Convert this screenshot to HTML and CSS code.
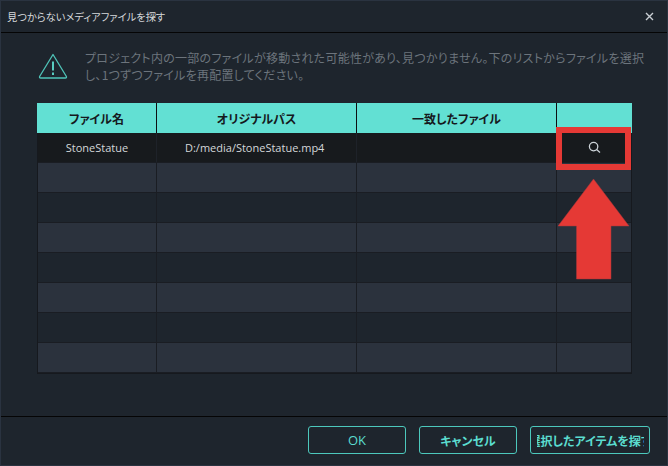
FILE: index.html
```html
<!DOCTYPE html>
<html lang="ja">
<head>
<meta charset="utf-8">
<title>見つからないメディアファイルを探す</title>
<link rel="stylesheet" href="styles.css">
</head>
<body>
<div class="dialog">
  <header class="titlebar">
    <span class="title">見つからないメディアファイルを探す</span>
    <svg class="close" width="9" height="9" viewBox="0 0 9 9"><path d="M1 1l7 7M8 1l-7 7" stroke="#c9ced3" stroke-width="1.4" fill="none"/></svg>
  </header>
  <main class="content">
    <div class="notice">
      <svg class="warn" width="30" height="26" viewBox="0 0 30 26"><path d="M15 1.5 L28.400 23.500 Q28.800 25 27.400 25 H2.600 Q1.200 25 1.600 23.500 Z" fill="none" stroke="#4fc4b8" stroke-width="1.3" stroke-linejoin="round"/><path d="M15 8.500V17.500" stroke="#5fe0d2" stroke-width="1.8"/><path d="M15 19.500V22" stroke="#5fe0d2" stroke-width="1.8"/></svg>
      <p class="message">プロジェクト内の一部のファイルが移動された可能性があり、見つかりません。下のリストからファイルを選択し、1つずつファイルを再配置してください。</p>
    </div>
    <div class="table">
      <div class="row head"><div class="c c1">ファイル名</div><div class="c c2">オリジナルパス</div><div class="c c3">一致したファイル</div><div class="c c4"></div></div>
      <div class="row dark"><div class="c c1">StoneStatue</div><div class="c c2">D:/media/StoneStatue.mp4</div><div class="c c3"></div><div class="c c4"><svg width="13" height="13" viewBox="0 0 13 13"><circle cx="5.600" cy="5.600" r="4.200" fill="none" stroke="#ccd3d8" stroke-width="1.300"/><path d="M8.600 8.600l3.400 2.800" stroke="#ccd3d8" stroke-width="1.300" fill="none"/></svg></div></div>
      <div class="row odd"><div class="c c1"></div><div class="c c2"></div><div class="c c3"></div><div class="c c4"></div></div>
      <div class="row even"><div class="c c1"></div><div class="c c2"></div><div class="c c3"></div><div class="c c4"></div></div>
      <div class="row odd"><div class="c c1"></div><div class="c c2"></div><div class="c c3"></div><div class="c c4"></div></div>
      <div class="row even"><div class="c c1"></div><div class="c c2"></div><div class="c c3"></div><div class="c c4"></div></div>
      <div class="row odd"><div class="c c1"></div><div class="c c2"></div><div class="c c3"></div><div class="c c4"></div></div>
      <div class="row even"><div class="c c1"></div><div class="c c2"></div><div class="c c3"></div><div class="c c4"></div></div>
      <div class="row odd"><div class="c c1"></div><div class="c c2"></div><div class="c c3"></div><div class="c c4"></div></div>
    </div>
  </main>
  <footer class="footer">
    <button class="btn b-ok">OK</button>
    <button class="btn b-cancel">キャンセル</button>
    <button class="btn b-find"><span class="clip"><span class="clip-text">選択したアイテムを探す</span></span></button>
  </footer>
  <div class="mark-box"></div>
  <svg class="mark-arrow" width="72" height="101" viewBox="0 0 72 101"><path d="M35.500 0 L71 47 H53 V100 H18.500 V47 H0 Z" fill="#e53935" stroke="#a8383c" stroke-width=".5"/></svg>
</div>
</body>
</html>
```
FILE: styles.css
```css
* { box-sizing: border-box; }
html, body { margin: 0; padding: 0; }
body { width: 668px; height: 466px; overflow: hidden; background: #1e252d; font-family: "Noto Sans CJK JP", "Noto Sans", sans-serif; }
.dialog { position: relative; width: 668px; height: 466px; display: flex; flex-direction: column; background: #1e252d; border: 1px solid #2a3340; }
.titlebar { height: 32px; flex: none; display: flex; align-items: center; justify-content: space-between; padding: 0 13px 1px 6px; border-bottom: 1px solid #050505; background: #1e252d; }
.title { font-size: 10.25px; color: #d5d8db; font-feature-settings: "palt"; white-space: nowrap; }
.content { flex: none; height: 384px; padding: 17px 0 0 36px; border-bottom: 1px solid #050505; }
.notice { display: flex; align-items: flex-start; height: 53px; }
.warn { flex: none; margin: 3px 0 0 1px; }
.message { margin: -1px 0 0 17px; width: 562px; font-size: 12px; letter-spacing: .26px; line-height: 17px; color: #6c747c; font-feature-settings: "palt"; }
.table { width: 595px; border-left: 1px solid #16191e; border-right: 1px solid #16191e; border-bottom: 1px solid #16191e; }
.row { display: flex; height: 30px; border-bottom: 1px solid #1a1d23; }
.c { height: 100%; display: flex; align-items: center; justify-content: center; border-right: 1px solid #1a1d23; }
.c1 { width: 119px; }
.c2 { width: 200px; }
.c3 { width: 200px; }
.c4 { width: 74px; border-right: 0; }
.head { background: #62e0d3; border-bottom: 0; margin-left: -1px; width: 595px; }
.head .c { border-right-color: #0c0f12; font-size: 12px; font-weight: 700; color: #15191d; font-feature-settings: "palt"; }
.head .c1 { width: 120px; }
.dark { background: #171a1d; color: #d4d8da; font-size: 11px; font-family: "Open Sans", "Noto Sans", sans-serif; }
.dark .c { border-right-color: #1e2229; }
.dark .c2 { justify-content: flex-start; padding-left: 28px; }
.odd { background: #2b323d; }
.even { background: #1e252d; }
.footer { flex: 1; display: flex; align-items: flex-start; padding: 9px 17px 0 307px; }
.btn { height: 28px; border: 1px solid #4cc8bc; border-radius: 3px; background: transparent; color: #5bdccf; font-family: inherit; font-size: 12px; font-weight: 700; padding: 0; }
.b-ok { width: 98px; font-family: "Open Sans", sans-serif; font-weight: 400; color: #5bdccf; font-size: 13px; }
.b-cancel { width: 98px; margin-left: 13px; font-feature-settings: "palt"; }
.b-find { width: 120px; margin-left: 13px; display: flex; align-items: center; justify-content: center; }
.clip { display: flex; justify-content: center; width: 107px; overflow: hidden; white-space: nowrap; }
.clip-text { flex: none; font-feature-settings: "palt"; }
.mark-box { position: absolute; left: 555px; top: 126px; width: 75px; height: 43px; border: 6px solid #e53935; }
.mark-arrow { position: absolute; left: 557px; top: 178px; }
```
